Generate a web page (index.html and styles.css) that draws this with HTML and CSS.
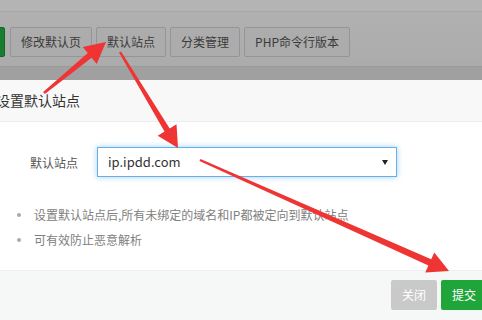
FILE: index.html
```html
<!DOCTYPE html>
<html lang="zh-CN">
<head>
  <meta charset="UTF-8" />
  <title>设置默认站点</title>
  <link rel="stylesheet" href="styles.css">
</head>
<body>
  <!-- dimmed page behind the layer -->
  <div class="page">
    <div class="topbar"></div>
    <div class="toolbar">
      <button class="btn btn-green">添加站点</button>
      <button class="btn">修改默认页</button>
      <button class="btn">默认站点</button>
      <button class="btn">分类管理</button>
      <button class="btn">PHP命令行版本</button>
    </div>
    <div class="toolbar-foot"></div>
  </div>

  <div class="layer">
    <div class="layer-title">设置默认站点</div>
    <div class="layer-body">
      <div class="line">
        <span class="tname">默认站点</span>
        <div class="select">ip.ipdd.com</div>
      </div>
      <ul class="help">
        <li>设置默认站点后,所有未绑定的域名和IP都被定向到默认站点</li>
        <li>可有效防止恶意解析</li>
      </ul>
    </div>
    <div class="layer-btns">
      <button class="btn-close">关闭</button>
      <button class="btn-submit">提交</button>
    </div>
  </div>

  <!-- annotation arrows -->
  <svg class="arrows" width="482" height="320" viewBox="0 0 482 320">
    <polygon points="44.8,93.9 91.6,57.7 96.7,63.9 106,42 82.7,46.9 87.8,53.1 43.2,92.1" />
    <polygon points="119,52.6 164.5,131.6 157.7,135.7 178,148 176.5,124.3 169.7,128.4 121,51.4" />
    <polygon points="199.5,161.1 428.4,265.6 425.3,272.4 449,271 434.3,252.4 431.2,259.2 200.5,158.9" />
  </svg>
</body>
</html>
```

FILE: styles.css
```css
html, body {
  margin: 0;
  width: 482px;
  height: 320px;
  overflow: hidden;
}

body {
  position: relative;
  font-family: "Noto Sans CJK SC", "Noto Sans", sans-serif;
  background: #fff;
}

button {
  font-family: inherit;
  cursor: pointer;
}

/* page under the shade */
.topbar {
  height: 11px;
  background: #b4b4b4;
  border-bottom: 1px solid #a8a8a8;
}

.toolbar {
  display: flex;
  gap: 4px;
  padding: 15px 0 9px;
  background: linear-gradient(#b1b1b1, #ababab);
}

.btn {
  height: 30px;
  padding: 0 10px;
  font-size: 12px;
  line-height: 28px;
  color: #3b3b3b;
  background: #acacac;
  border: 1px solid #959595;
  border-radius: 2px;
  white-space: nowrap;
}

.btn-green {
  margin-left: -65px;
  margin-right: 1px;
  color: #cfe3d3;
  background: #1a7c2e;
  border-color: #156526;
}

.toolbar-foot {
  height: 13px;
  background: #a0a0a0;
  border-top: 1px solid #9a9a9a;
}

/* layer */
.layer {
  margin-left: -24px;
  width: 526px;
  background: #fff;
}

.layer-title {
  height: 41px;
  line-height: 41px;
  padding-left: 20px;
  font-size: 14px;
  color: #333;
  background: #f8f8f8;
  border-bottom: 1px solid #ececec;
}

.layer-body {
  padding: 25px 0 18px;
}

.line {
  display: flex;
  align-items: center;
  padding-left: 54px;
}

.tname {
  margin-right: 19px;
  font-size: 12px;
  color: #555;
}

.select {
  position: relative;
  box-sizing: border-box;
  width: 300px;
  height: 30px;
  padding-left: 10px;
  font-size: 13px;
  line-height: 28px;
  color: #333;
  border: 1px solid #66afe9;
  box-shadow: 0 0 6px rgba(102, 175, 233, 0.6);
}

.select::after {
  content: "";
  position: absolute;
  right: 8px;
  top: 12px;
  border-left: 3px solid transparent;
  border-right: 3px solid transparent;
  border-top: 5px solid #222;
}

.help {
  list-style: none;
  margin: 25px 0 0;
  padding-left: 43px;
}

.help li {
  display: flex;
  align-items: center;
  height: 25px;
  font-size: 12px;
  color: #808080;
}

.help li::before {
  content: "";
  width: 4px;
  height: 4px;
  margin: 0 13px 0 -2px;
  border-radius: 50%;
  background: #aaa;
}

.layer-btns {
  display: flex;
  justify-content: flex-end;
  gap: 4px;
  padding: 9px 15px 10px;
  background: #f6f7f7;
  border-top: 1px solid #eeeeee;
}

.layer-btns button {
  height: 30px;
  padding: 0 11px;
  font-size: 12px;
  line-height: 30px;
  color: #fff;
  border: none;
  border-radius: 2px;
}

.btn-close {
  background: #c9c9c9;
}

.btn-submit {
  background: #20a53a;
}

.arrows {
  position: absolute;
  top: 0;
  left: 0;
  pointer-events: none;
}

.arrows polygon {
  fill: #ef3434;
}
```
